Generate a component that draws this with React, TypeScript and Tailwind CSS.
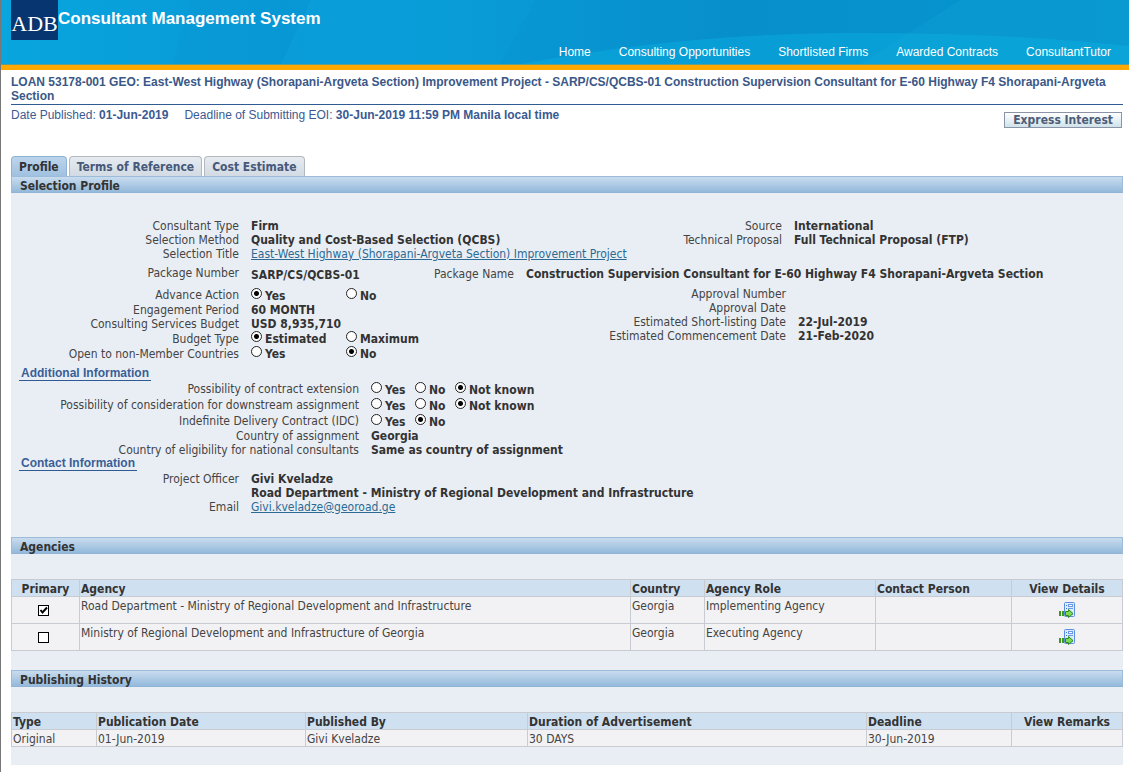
import { ReactNode } from "react";

const navLinks = ["Home", "Consulting Opportunities", "Shortlisted Firms", "Awarded Contracts", "ConsultantTutor"];

const agencies = [
  {
    primary: true,
    name: "Road Department - Ministry of Regional Development and Infrastructure",
    country: "Georgia",
    role: "Implementing Agency",
  },
  {
    primary: false,
    name: "Ministry of Regional Development and Infrastructure of Georgia",
    country: "Georgia",
    role: "Executing Agency",
  },
];

const cell = "border border-[#c8cbd2] px-px pt-0.5 align-top";

function SectionBar({ title }: { title: string }) {
  return (
    <h2 className="h-[17px] border border-[#9dbcd9] border-b-[#8fb4d6] bg-linear-to-b from-[#c9dcee] to-[#94b9db] px-2 pt-0.5 text-[12px] leading-[14px] font-bold text-[#333]">
      {title}
    </h2>
  );
}

function SubHeading({ children }: { children: ReactNode }) {
  return (
    <h3 className="ml-2 w-fit border-b border-[#2f5a92] px-0.5 font-['Liberation_Sans',sans-serif] text-[12px] leading-[13px] font-bold text-[#3a5f95]">
      {children}
    </h3>
  );
}

function Row({ label, width, children }: { label: string; width: string; children?: ReactNode }) {
  return (
    <div className="flex gap-3 whitespace-nowrap">
      <span className={`${width} shrink-0 text-right`}>{label}</span>
      <div className="font-bold text-[#333]">{children}</div>
    </div>
  );
}

type Option = { label: string; width?: string };

function RadioRow({
  label,
  name,
  width,
  options,
  selected,
  height,
}: {
  label: string;
  name: string;
  width: string;
  options: Option[];
  selected: string;
  height: string;
}) {
  return (
    <fieldset className={`flex items-center gap-3 whitespace-nowrap ${height}`}>
      <span className={`${width} shrink-0 text-right`}>{label}</span>
      <div className="flex font-bold text-[#333]">
        {options.map((o) => (
          <label key={o.label} className={`flex items-start gap-[3px] ${o.width ?? ""}`}>
            <input
              type="radio"
              name={name}
              defaultChecked={o.label === selected}
              className="size-[11px] shrink-0 appearance-none rounded-full border border-[#222] bg-white checked:bg-[radial-gradient(circle,#000_2px,#fff_3px)]"
            />
            <span className="pt-px">{o.label}</span>
          </label>
        ))}
      </div>
    </fieldset>
  );
}

function DetailsIcon() {
  return (
    <svg width="17" height="17" viewBox="0 0 17 17" fill="none">
      <rect x="5.5" y="0.5" width="10" height="14" rx="1" fill="#dcebff" stroke="#5a8fe0" />
      <path d="M7 3.5h1M7 6.5h1" stroke="#3f78d0" />
      <rect x="9.5" y="2.5" width="4" height="2" fill="#fff" stroke="#6a9ae6" />
      <path d="M9 6.5h5M13 12.500h1" stroke="#6a9ae6" />
      <path d="M1 9v5M4 9v5" stroke="#3d9a1f" strokeWidth="2" />
      <path d="M6.500 9.500h3v-2l4.500 4-4.500 4v-2h-3z" fill="#7ddb55" stroke="#2e8a18" />
    </svg>
  );
}

function HeaderArt() {
  return (
    <svg className="absolute inset-0 size-full" viewBox="0 0 1129 65" preserveAspectRatio="none">
      <defs>
        <linearGradient id="sky" x1="0" x2="1" y1="0" y2="0">
          <stop offset="0" stopColor="#08a5de" />
          <stop offset="0.25" stopColor="#0899d7" />
          <stop offset="0.33" stopColor="#089cd8" />
          <stop offset="0.65" stopColor="#078fcb" />
          <stop offset="1" stopColor="#0696cf" />
        </linearGradient>
      </defs>
      <rect width="1129" height="65" fill="url(#sky)" />
      <path d="M190 0L172 64H280L310 0z" fill="#0588cc" opacity="0.12" />
      <path d="M310 0L280 64H500L535 0z" fill="#12aee6" opacity="0.15" />
      <path d="M520 64Q680 34 840 33T1129 46V64z" fill="#0aa9dc" opacity="0.6" />
      <path d="M960 0L860 64H1129V0z" fill="#1cb4de" opacity="0.15" />
      <rect y="64" width="1129" height="1" fill="#5f9e8c" />
    </svg>
  );
}

const yesNo: Option[] = [{ label: "Yes", width: "w-[95px]" }, { label: "No" }];
const yesNoUnknown: Option[] = [
  { label: "Yes", width: "w-11" },
  { label: "No", width: "w-10" },
  { label: "Not known" },
];

export default function App() {
  return (
    <div className="min-h-screen border-l border-[#777] bg-white font-['DejaVu_Sans_Condensed','DejaVu_Sans',sans-serif] text-[12px] leading-[14px] text-[#444]">
      <header className="relative flex h-[70px] items-start border-b-[5px] border-[#ffa800] pl-2.5">
        <HeaderArt />
        <div className="relative flex h-10 w-[47px] items-center justify-center bg-[#07356f] pt-2 font-['Liberation_Serif',serif] text-[22px] leading-6 text-white">
          ADB
        </div>
        <h1 className="relative pt-[9px] font-['Liberation_Sans',sans-serif] text-[17px] leading-5 font-bold text-white">
          Consultant Management System
        </h1>
        <nav className="relative ml-auto flex gap-7 self-end pr-[18px] pb-[5px] font-['Liberation_Sans',sans-serif] text-[12px] leading-4 text-white">
          {navLinks.map((link) => (
            <a key={link} href="#">
              {link}
            </a>
          ))}
        </nav>
      </header>

      <main className="pr-1.5 pl-2.5">
        <div className="border-b border-[#2f5a92] pt-[5px] pb-px font-['Liberation_Sans',sans-serif] text-[12px] leading-[14px] font-bold text-[#3a5887]">
          LOAN 53178-001 GEO: East-West Highway (Shorapani-Argveta Section) Improvement Project - SARP/CS/QCBS-01
          Construction Supervision Consultant for E-60 Highway F4 Shorapani-Argveta Section
        </div>

        <div className="flex h-[51px] items-start justify-between font-['Liberation_Sans',sans-serif] text-[12px] text-[#3a5a92]">
          <div className="flex gap-4 pt-[3px]">
            <p>
              Date Published: <b>01-Jun-2019</b>
            </p>
            <p>
              Deadline of Submitting EOI: <b>30-Jun-2019 11:59 PM Manila local time</b>
            </p>
          </div>
          <button className="mt-[7px] mr-px h-4 border border-[#8a93a8] bg-linear-to-b from-white to-[#cfe3ea] px-2 font-['DejaVu_Sans_Condensed','DejaVu_Sans',sans-serif] leading-[14px] font-bold text-[#4e5c78]">
            Express Interest
          </button>
        </div>

        <div role="tablist" className="flex h-5 items-end gap-0.5 font-bold text-[#46597a]">
          <button role="tab" aria-selected="true" className="h-5 rounded-t border border-b-0 border-[#8fb3d5] bg-linear-to-b from-[#bdd5eb] to-[#9fc1e0] px-[7px] text-[#333]">
            Profile
          </button>
          <button role="tab" aria-selected="false" className="h-5 rounded-t border border-b-0 border-[#b4b9c0] bg-linear-to-b from-[#e6ebf1] to-[#d2dae3] px-[7px]">
            Terms of Reference
          </button>
          <button role="tab" aria-selected="false" className="h-5 rounded-t border border-b-0 border-[#b4b9c0] bg-linear-to-b from-[#e6ebf1] to-[#d2dae3] px-[7px]">
            Cost Estimate
          </button>
        </div>

        <div className="bg-[#e9eef5] pb-[18px]">
          <SectionBar title="Selection Profile" />
          <div className="pt-[26px] pb-[23px]">
            <div className="grid grid-cols-2">
              <div>
                <Row label="Consultant Type" width="w-[228px]">Firm</Row>
                <Row label="Selection Method" width="w-[228px]">Quality and Cost-Based Selection (QCBS)</Row>
                <Row label="Selection Title" width="w-[228px]">
                  <a href="#" className="font-normal text-[#2c6a93] underline">
                    East-West Highway (Shorapani-Argveta Section) Improvement Project
                  </a>
                </Row>
              </div>
              <div>
                <Row label="Source" width="w-[215px]">International</Row>
                <Row label="Technical Proposal" width="w-[215px]">Full Technical Proposal (FTP)</Row>
              </div>
            </div>

            <div className="flex h-[26px] items-center whitespace-nowrap">
              <div className="w-[415px]">
                <Row label="Package Number" width="w-[228px]">
                  <span className="block pt-0.5">SARP/CS/QCBS-01</span>
                </Row>
              </div>
              <Row label="Package Name" width="w-[88px]">
                Construction Supervision Consultant for E-60 Highway F4 Shorapani-Argveta Section
              </Row>
            </div>

            <div className="grid grid-cols-2">
              <div>
                <RadioRow label="Advance Action" name="advance" width="w-[228px]" options={yesNo} selected="Yes" height="h-4" />
                <Row label="Engagement Period" width="w-[228px]">60 MONTH</Row>
                <Row label="Consulting Services Budget" width="w-[228px]">USD 8,935,710</Row>
                <RadioRow
                  label="Budget Type"
                  name="budget"
                  width="w-[228px]"
                  options={[{ label: "Estimated", width: "w-[95px]" }, { label: "Maximum" }]}
                  selected="Estimated"
                  height="h-[15px]"
                />
                <RadioRow label="Open to non-Member Countries" name="open" width="w-[228px]" options={yesNo} selected="No" height="h-[15px]" />
              </div>
              <div>
                <Row label="Approval Number" width="w-[219px]" />
                <Row label="Approval Date" width="w-[219px]" />
                <Row label="Estimated Short-listing Date" width="w-[219px]">22-Jul-2019</Row>
                <Row label="Estimated Commencement Date" width="w-[219px]">21-Feb-2020</Row>
              </div>
            </div>

            <div className="pt-[6px]">
              <SubHeading>Additional Information</SubHeading>
              <RadioRow label="Possibility of contract extension" name="extension" width="w-[348px]" options={yesNoUnknown} selected="Not known" height="h-4" />
              <RadioRow label="Possibility of consideration for downstream assignment" name="downstream" width="w-[348px]" options={yesNoUnknown} selected="Not known" height="h-4" />
              <RadioRow label="Indefinite Delivery Contract (IDC)" name="idc" width="w-[348px]" options={yesNoUnknown.slice(0, 2)} selected="No" height="h-4" />
              <Row label="Country of assignment" width="w-[348px]">Georgia</Row>
              <Row label="Country of eligibility for national consultants" width="w-[348px]">
                Same as country of assignment
              </Row>
            </div>

            <SubHeading>Contact Information</SubHeading>
            <div className="pt-px">
              <Row label="Project Officer" width="w-[228px]">
                Givi Kveladze
                <br />
                Road Department - Ministry of Regional Development and Infrastructure
              </Row>
              <Row label="Email" width="w-[228px]">
                <a href="#" className="font-normal text-[#2c6a93] underline">
                  Givi.kveladze@georoad.ge
                </a>
              </Row>
            </div>
          </div>

          <SectionBar title="Agencies" />
          <table className="mt-[25px] mb-[19px] w-full table-fixed border-collapse bg-[#f2f2f5] text-left">
            <colgroup>
              <col className="w-[68px]" />
              <col />
              <col className="w-[74px]" />
              <col className="w-[171px]" />
              <col className="w-[136px]" />
              <col className="w-[111px]" />
            </colgroup>
            <thead>
              <tr className="h-[17px] bg-[#cfe0f1] text-[#333]">
                <th className={`${cell} text-center`}>Primary</th>
                <th className={cell}>Agency</th>
                <th className={cell}>Country</th>
                <th className={cell}>Agency Role</th>
                <th className={cell}>Contact Person</th>
                <th className={`${cell} text-center`}>View Details</th>
              </tr>
            </thead>
            <tbody>
              {agencies.map((a) => (
                <tr key={a.name} className="h-[27px]">
                  <td className="border border-[#c8cbd2] pr-1">
                    <div className="relative mx-auto size-[11px]">
                      <input
                        type="checkbox"
                        aria-label={`${a.name} is primary`}
                        defaultChecked={a.primary}
                        className="peer block size-[11px] appearance-none border border-black bg-white"
                      />
                      <svg
                        className="pointer-events-none absolute inset-0 hidden peer-checked:block"
                        width="11"
                        height="11"
                        viewBox="0 0 11 11"
                        fill="none"
                      >
                        <path d="M2.500 5l2 2.500 4.500-5" stroke="#000" strokeWidth="2" />
                      </svg>
                    </div>
                  </td>
                  <td className={cell}>{a.name}</td>
                  <td className={cell}>{a.country}</td>
                  <td className={cell}>{a.role}</td>
                  <td className={cell}></td>
                  <td className="border border-[#c8cbd2]">
                    <a href="#" aria-label={`View details of ${a.name}`} className="mx-auto block w-fit">
                      <DetailsIcon />
                    </a>
                  </td>
                </tr>
              ))}
            </tbody>
          </table>

          <SectionBar title="Publishing History" />
          <table className="mt-[25px] w-full table-fixed border-collapse bg-[#f2f2f5] text-left">
            <colgroup>
              <col className="w-[85px]" />
              <col className="w-[209px]" />
              <col className="w-[222px]" />
              <col />
              <col className="w-[145px]" />
              <col className="w-[111px]" />
            </colgroup>
            <thead>
              <tr className="h-[17px] bg-[#cfe0f1] text-[#333]">
                <th className={cell}>Type</th>
                <th className={cell}>Publication Date</th>
                <th className={cell}>Published By</th>
                <th className={cell}>Duration of Advertisement</th>
                <th className={cell}>Deadline</th>
                <th className={`${cell} text-center`}>View Remarks</th>
              </tr>
            </thead>
            <tbody>
              <tr className="h-[17px]">
                <td className={cell}>Original</td>
                <td className={cell}>01-Jun-2019</td>
                <td className={cell}>Givi Kveladze</td>
                <td className={cell}>30 DAYS</td>
                <td className={cell}>30-Jun-2019</td>
                <td className={cell}></td>
              </tr>
            </tbody>
          </table>
        </div>
      </main>
    </div>
  );
}
